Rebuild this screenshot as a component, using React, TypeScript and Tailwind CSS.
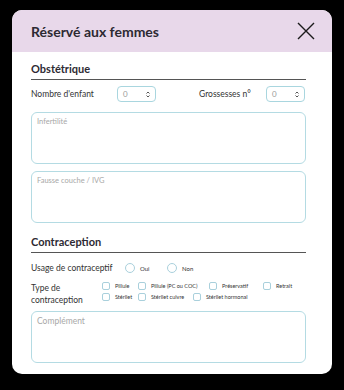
import React from 'react';

const font = { fontFamily: 'Lato, "Open Sans", sans-serif' };

const SelectBox = () => (
  <div className="flex items-center justify-between w-[39px] h-[16px] border border-[#a9d6df] rounded-[4px] pl-[5px] pr-[5px]">
    <span className="text-[8px] text-[#9a9a9a]">0</span>
    <svg width="4" height="7" viewBox="0 0 4 7">
      <path d="M0.5 2.5 L2 1 L3.5 2.5 M0.5 4.5 L2 6 L3.5 4.5" fill="none" stroke="#555" strokeWidth="1" />
    </svg>
  </div>
);

const Area = ({ placeholder, size = 'text-[7.5px]' }: { placeholder: string; size?: string }) => (
  <div className="h-[52px] border border-[#b4dbe3] rounded-[6px] px-[5px] pt-[4px]">
    <span className={`block leading-[10px] ${size} text-[#a8a8a8]`}>{placeholder}</span>
  </div>
);

const Check = ({ label, w }: { label: string; w: string }) => (
  <div className={`flex items-center gap-[5px] ${w}`}>
    <span className="w-[8px] h-[8px] border border-[#a9d0dc] rounded-[2px] shrink-0" />
    <span className="text-[5.5px] text-[#333] whitespace-nowrap">{label}</span>
  </div>
);

const Section = ({ title }: { title: string }) => (
  <div className="border-b border-[#555] pb-[2px]">
    <h2 className="text-[11px] font-bold text-[#2d2a33] leading-[16px]">{title}</h2>
  </div>
);

export default function App() {
  return (
    <div className="w-[344px] h-[390px] bg-black pt-[10px] px-[12px]" style={font}>
      <div className="w-[320px] h-[364px] bg-white rounded-[10px] overflow-hidden">
        {/* Header */}
        <div className="h-[42px] bg-[#e8d8ea] flex items-center justify-between pl-[19px] pr-[17px]">
          <h1 className="text-[14px] font-bold text-[#2d2a33]">Réservé aux femmes</h1>
          <svg width="18" height="18" viewBox="0 0 18 18">
            <path d="M1 1 L17 17 M17 1 L1 17" stroke="#1b1b1b" strokeWidth="1.4" />
          </svg>
        </div>

        <div className="pl-[19px] pr-[26px] pt-[9px]">
          <Section title="Obstétrique" />

          <div className="flex items-center h-[16px] mt-[6px] text-[8.5px] text-[#333]">
            <span className="w-[86px]">Nombre d'enfant</span>
            <SelectBox />
            <span className="ml-[43px] w-[67px]">Grossesses n°</span>
            <SelectBox />
          </div>

          <div className="mt-[10px] flex flex-col gap-[7px]">
            <Area placeholder="Infertilité" />
            <Area placeholder="Fausse couche / IVG" />
          </div>

          <div className="mt-[11px]">
            <Section title="Contraception" />
          </div>

          <div className="flex items-center mt-[9px] text-[8.5px] text-[#333]">
            <span className="w-[94px]">Usage de contraceptif</span>
            <span className="w-[10px] h-[10px] rounded-full border border-[#a9d0dc]" />
            <span className="ml-[5px] w-[27px] text-[6px]">Oui</span>
            <span className="w-[10px] h-[10px] rounded-full border border-[#a9d0dc]" />
            <span className="ml-[5px] text-[6px]">Non</span>
          </div>

          <div className="flex mt-[7px]">
            <div className="w-[71px] text-[8.5px] leading-[12px] text-[#333]">
              Type de
              <br />
              contraception
            </div>
            <div className="flex flex-col gap-[3px] pt-[0px]">
              <div className="flex">
                <Check label="Pillule" w="w-[36px]" />
                <Check label="Pillule (PC ou COC)" w="w-[71px]" />
                <Check label="Préservatif" w="w-[54px]" />
                <Check label="Retrait" w="w-[40px]" />
              </div>
              <div className="flex">
                <Check label="Stérilet" w="w-[36px]" />
                <Check label="Stérilet cuivre" w="w-[55px]" />
                <Check label="Stérilet hormonal" w="w-[60px]" />
              </div>
            </div>
          </div>

          <div className="mt-[5px]">
            <Area placeholder="Complément" size="text-[8.5px]" />
          </div>
        </div>
      </div>
    </div>
  );
}
